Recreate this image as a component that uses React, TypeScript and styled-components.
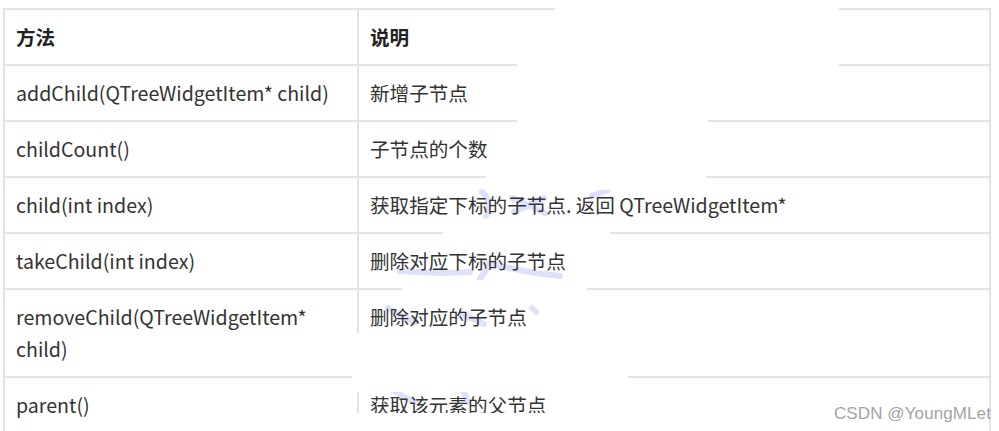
import styled, { createGlobalStyle } from 'styled-components'
import { FC } from 'react'

const GlobalStyle = createGlobalStyle`
    html, body {
        margin: 0;
        padding: 0;
        background: #ffffff;
    }
    body {
        width: 999px;
        height: 431px;
        overflow: hidden;
        font-family: 'Noto Sans CJK SC', 'Noto Sans', sans-serif;
    }
`;

const Page = styled.div`
    position: relative;
    width: 999px;
    height: 431px;
    overflow: hidden;
    padding: 8px 0 0 3px;
    box-sizing: border-box;
`;

const Table = styled.table`
    position: relative;
    z-index: 1;
    border-collapse: collapse;
    width: 988px;
    table-layout: fixed;
    color: #333333;
    font-size: 19.6px;
`;

const HeadCell = styled.th`
    border: 2px solid #e3e4e9;
    text-align: left;
    font-weight: 700;
    color: #222222;
    height: 32px;
    padding: 11px 11px;
    line-height: 32px;
`;

const Cell = styled.td<{ $top?: boolean }>`
    border: 2px solid #e3e4e9;
    vertical-align: ${(p) => (p.$top ? 'top' : 'middle')};
    padding: 11px 11px;
    line-height: 32px;
    height: 32px;
`;

// white patches that cut through the grid lines in the screenshot
const Patch = styled.div`
    position: absolute;
    z-index: 2;
    background: #ffffff;
`;

// faint watermark brush strokes behind the text
const Smudge = styled.svg`
    position: absolute;
    z-index: 0;
    left: 0;
    top: 0;
    pointer-events: none;
`;

const Watermark = styled.div`
    position: absolute;
    z-index: 3;
    right: 8px;
    bottom: 7px;
    font-family: 'Liberation Sans', Arial, sans-serif;
    font-size: 17px;
    color: #a3a3a3;
    letter-spacing: 0.1px;
`;

interface Row {
    method: string,
    desc: string,
    top?: boolean
}

const rows: Row[] = [
    { method: 'addChild(QTreeWidgetItem* child)', desc: '新增子节点' },
    { method: 'childCount()', desc: '子节点的个数' },
    { method: 'child(int index)', desc: '获取指定下标的子节点. 返回 QTreeWidgetItem*' },
    { method: 'takeChild(int index)', desc: '删除对应下标的子节点' },
    { method: 'removeChild(QTreeWidgetItem* child)', desc: '删除对应的子节点', top: true },
    { method: 'parent()', desc: '获取该元素的父节点' },
]

const patches = [
    { left: 555, top: 0, width: 284, height: 22 },
    { left: 517, top: 40, width: 322, height: 45 },
    { left: 517, top: 100, width: 191, height: 38 },
    { left: 486, top: 160, width: 220, height: 30 },
    { left: 443, top: 222, width: 167, height: 22 },
    { left: 402, top: 280, width: 185, height: 20 },
    { left: 352, top: 333, width: 276, height: 59 },
    { left: 352, top: 413, width: 470, height: 18 },
]

const App: FC = () => {
    return (
        <Page>
            <GlobalStyle />
            <Smudge width="999" height="431" viewBox="0 0 999 431">
                <g fill="none" stroke="#d6daf8" strokeWidth="6" strokeLinecap="round" opacity="0.8">
                    <path d="M482 192 Q492 200 486 216" />
                    <path d="M512 198 L545 213 M544 198 L514 212" />
                    <path d="M592 196 L608 190" />
                    <path d="M484 262 Q520 272 560 276" />
                    <path d="M486 270 L478 282" />
                    <path d="M400 271 Q440 274 470 272" />
                    <path d="M388 308 Q402 318 416 322" />
                    <path d="M462 314 L484 324" />
                    <path d="M532 308 L536 312" />
                    <path d="M390 388 Q404 398 416 402" />
                    <path d="M462 388 L468 402" />
                </g>
            </Smudge>
            <Table>
                <colgroup>
                    <col style={{ width: 354 }} />
                    <col />
                </colgroup>
                <thead>
                    <tr>
                        <HeadCell>方法</HeadCell>
                        <HeadCell>说明</HeadCell>
                    </tr>
                </thead>
                <tbody>
                    {rows.map((r) => (
                        <tr key={r.method}>
                            <Cell>{r.method}</Cell>
                            <Cell $top={r.top}>{r.desc}</Cell>
                        </tr>
                    ))}
                </tbody>
            </Table>
            {patches.map((p, i) => (
                <Patch key={i} style={p} />
            ))}
            <Watermark>CSDN @YoungMLet</Watermark>
        </Page>
    )
}

export default App
